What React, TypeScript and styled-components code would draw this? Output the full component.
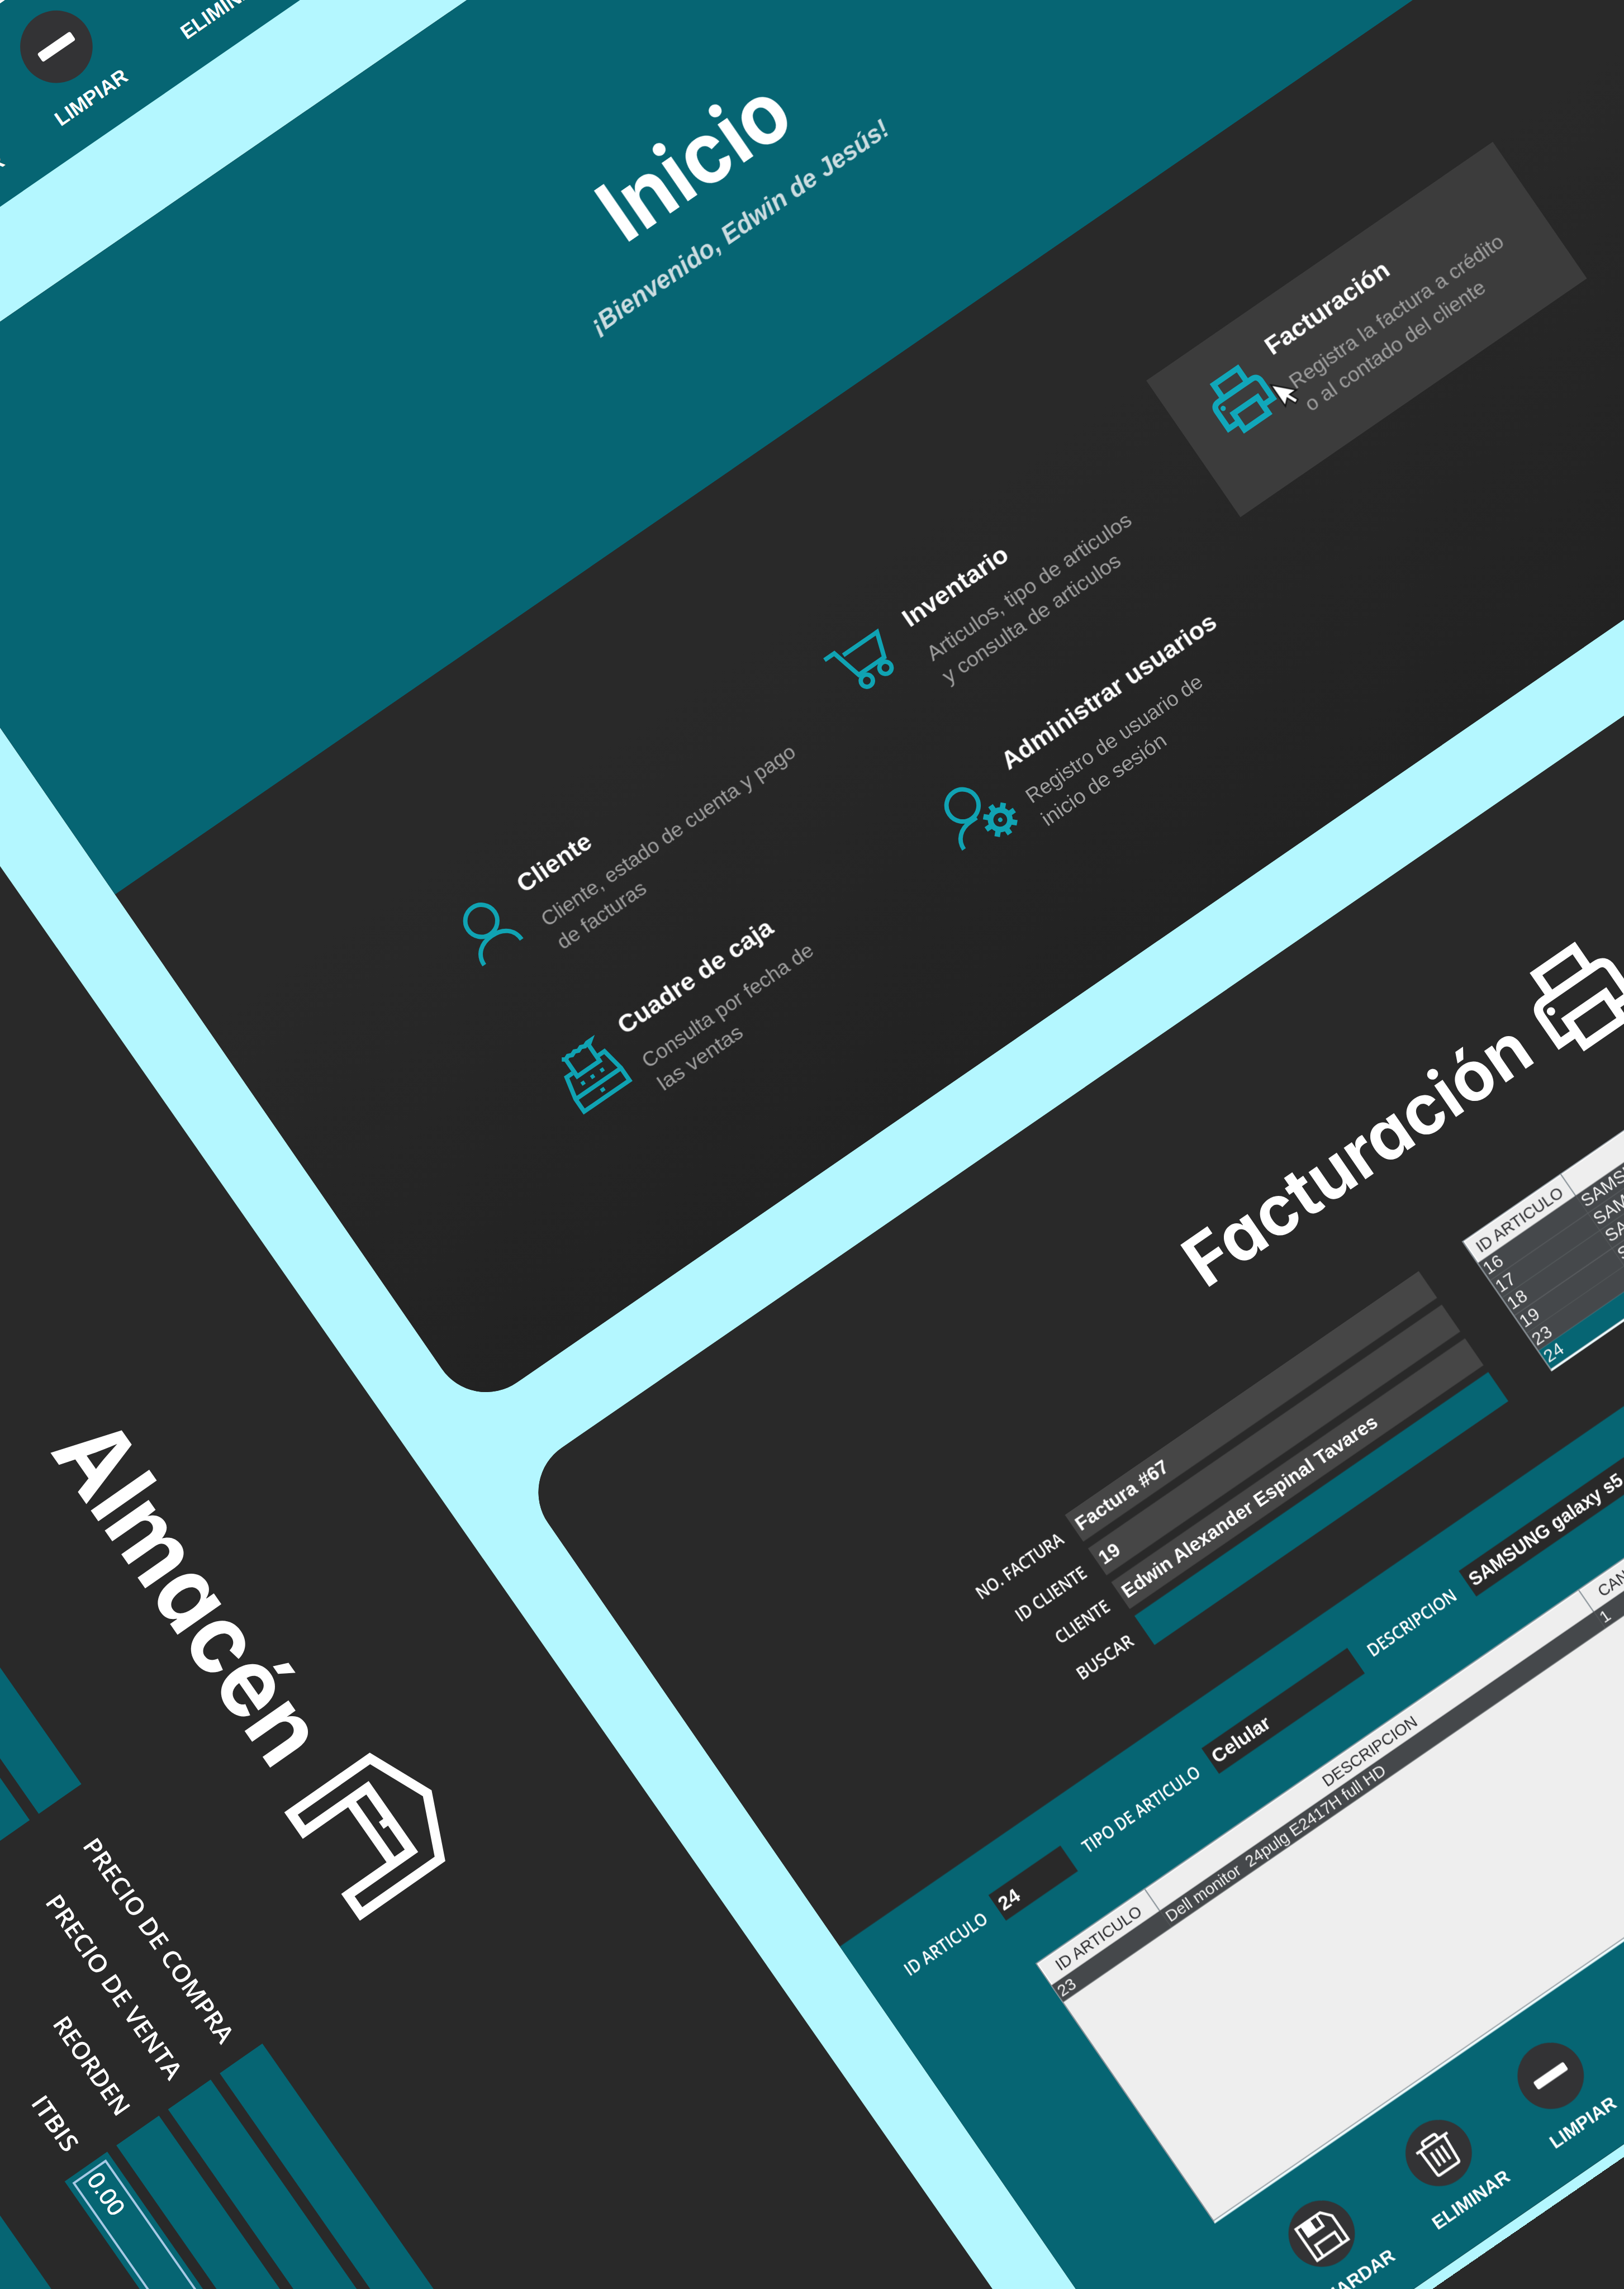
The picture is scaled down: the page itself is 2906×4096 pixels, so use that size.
import React, { ReactNode, useLayoutEffect, useRef, useState } from "react";
import styled, { createGlobalStyle, css } from "styled-components";

const color = {
  sky: "#b4f7ff",
  teal: "#066573",
  dark: "#292929",
  darkEnd: "#222222",
  field: "#464646",
  tile: "#3c3c3c",
  accent: "#10a3b3",
  disc: "#333335",
  paper: "#eeeeee",
  rowDark: "#45484b",
  rule: "#7f8a91",
};

const arial = `"Liberation Sans", Arial, sans-serif`;
const label = `"Open Sans", "Noto Sans", sans-serif`;
const display = `Inter, "Liberation Sans", sans-serif`;

const GlobalStyle = createGlobalStyle`
  html, body { margin: 0; padding: 0; background: ${color.sky}; overflow: hidden; }
  * { box-sizing: border-box; }
`;

const Viewport = styled.main`
  position: relative;
  width: 2906px;
  height: 4096px;
  overflow: hidden;
  background: ${color.sky};
`;

const Board = styled.div`
  position: relative;
  width: 2937px;
  height: 4139px;
  transform-origin: 0 0;
  transform: scale(0.98944, 0.98961);
`;

/* A screen of the application laid at an angle on the board. */
const Screen = styled.section<{ $angle: number; $x: number; $y: number; $h: number; $bg?: string }>`
  position: absolute;
  left: 0;
  top: 0;
  width: 3751px;
  height: ${(p) => p.$h}px;
  border-radius: 98px;
  overflow: hidden;
  background: ${(p) => p.$bg ?? color.dark};
  transform-origin: 0 0;
  transform: rotate(${(p) => p.$angle}deg) translate(${(p) => p.$x}px, ${(p) => p.$y}px);
  font-family: ${arial};
  display: flex;
  flex-direction: column;
`;

/* ---------- text set to a given measure ---------- */

const Measure = styled.span<{ $w: number }>`
  display: inline-block;
  width: ${(p) => p.$w}px;
  white-space: pre;
  text-align: left;
`;

const Glyphs = styled.span`
  display: inline-block;
  transform-origin: 0 50%;
`;

function Fit({ w, children }: { w: number; children: string }) {
  const ref = useRef<HTMLSpanElement>(null);
  const [k, setK] = useState(1);
  useLayoutEffect(() => {
    if (!ref.current) return;
    const natural = parseFloat(getComputedStyle(ref.current).width);
    if (natural > 0) setK(w / natural);
  }, [w, children]);
  return (
    <Measure $w={w}>
      <Glyphs ref={ref} style={{ transform: `scaleX(${k})` }}>
        {children}
      </Glyphs>
    </Measure>
  );
}

/* ---------- headings ---------- */

const Heading = styled.h1<{ $size: number; $top?: number }>`
  margin: ${(p) => p.$top ?? 0}px 0 0;
  font-family: ${display};
  font-feature-settings: "cv11" 1, "ss03" 1;
  font-weight: 700;
  font-size: ${(p) => p.$size}px;
  line-height: ${(p) => p.$size}px;
  color: #fff;
  white-space: nowrap;
`;

const TitleRow = styled.div<{ $top: number; $left: number; $gap: number }>`
  display: flex;
  align-items: flex-start;
  gap: ${(p) => p.$gap}px;
  padding: ${(p) => p.$top}px 0 0 ${(p) => p.$left}px;
  flex: none;
`;

/* ---------- icons ---------- */

const Svg = styled.svg<{ $w: number; $h: number }>`
  display: block;
  flex: none;
  width: ${(p) => p.$w}px;
  height: ${(p) => p.$h}px;
  overflow: visible;
`;

const PrinterShape = () => (
  <g fill="none" stroke="currentColor" strokeWidth="16.5">
    <path d="M44.5 56V8.5H127.5V56" />
    <path d="M44 136.5H8.5V77Q8.5 56.5 29 56.5H142Q162.5 56.5 162.5 77V136.5H128" />
    <rect x="44.5" y="108.5" width="83" height="56" />
    <circle cx="28.5" cy="79.5" r="7.5" fill="currentColor" stroke="none" />
  </g>
);

const Stroke = ({ children }: { children: ReactNode }) => (
  <g fill="none" stroke={color.accent} strokeWidth="8">
    {children}
  </g>
);

const PrinterGlyph = () => (
  <g transform="translate(20 27) scale(.632)" color="#11a7ba">
    <PrinterShape />
  </g>
);

const UserGlyph = () => (
  <Stroke>
    <circle cx="73.5" cy="46" r="29" />
    <path d="M32.5 115C32.5 92 50 79 73.5 79S114.5 92 114.5 115" />
  </Stroke>
);

const CartGlyph = () => (
  <Stroke>
    <path d="M5 10H26.5L41 67H97L112 22H38" />
    <circle cx="47" cy="84" r="11" />
    <circle cx="88" cy="84" r="11" />
  </Stroke>
);

const RegisterGlyph = () => (
  <Stroke>
    <path d="M52 62V25L46 21L52 25L59 22L66 25L73 22L80 25L87 22L94 25L101 22L108 22L101 27V62" />
    <path d="M48 62H105" />
    <path d="M48 52.5H35L26 94V121.500H125.500V94L118 52.5H104" />
    <path d="M27 94.500H125" />
    <path d="M50 78H57M71 78H78M92 78H99M72 108H80" strokeWidth="7" />
  </Stroke>
);

const GearTeeth = [0, 45, 90, 135, 180, 225, 270, 315];

const AdminGlyph = () => (
  <Stroke>
    <circle cx="60.500" cy="54" r="29" />
    <path d="M17.500 121C17.500 101 33 86.500 56 86.500H69" />
    <g transform="translate(102 114)">
      <circle r="17.500" strokeWidth="10" />
      {GearTeeth.map((a) => (
        <rect key={a} x="-5" y="-31" width="10" height="12" fill={color.accent} stroke="none" transform={`rotate(${a})`} />
      ))}
      <circle r="4" fill={color.accent} stroke="none" />
    </g>
  </Stroke>
);

const Warehouse = () => (
  <Svg $w={239} $h={241} viewBox="0 0 239 241">
    <g fill="none" stroke="#fff" strokeWidth="17.5">
      <path d="M8.500 232.500V58.500L119.500 9.500L230 58.500V232.500H188.500V92.500H49.500V232.500Z" />
      <path d="M49.500 132.500H188.500" />
      <path d="M119.500 98V111" strokeWidth="15" />
    </g>
  </Svg>
);

/* ---------- Inicio ---------- */

const Hero = styled.header`
  flex: none;
  height: 971px;
  background: ${color.teal};
  padding: 394px 0 0 1294px;
`;

const Greeting = styled.p`
  margin: 44px 0 0;
  font: italic 700 47px/50px ${arial};
  color: #cbdce0;
`;

const Modules = styled.div`
  flex: 1;
  display: grid;
  grid-template-columns: 845px 820px 761px;
  grid-template-rows: 300px 300px;
  row-gap: 14px;
  padding: 326px 0 0 398px;
  background: linear-gradient(${color.dark} 25%, ${color.darkEnd});
`;

const Tile = styled.article<{ $active?: boolean; $indent?: number }>`
  position: relative;
  width: 761px;
  height: 300px;
  display: flex;
  gap: 25px;
  padding: 52px 0 0 ${(p) => 48 + (p.$indent ?? 0)}px;
  ${(p) =>
    p.$active &&
    css`
      background: ${color.tile};
      margin-top: -33px;
    `}
`;

const TileIcon = styled.div`
  flex: none;
  width: 140px;
  height: 140px;
  margin-top: -9px;
`;

const TileTitle = styled.h2`
  margin: 0;
  font: 700 45.5px/50px ${arial};
  color: #fff;
  white-space: nowrap;
`;

const TileText = styled.p`
  margin: 25.500px 0 0;
  font: 400 37.4px/50.500px ${arial};
  color: #9f9f9f;
  display: flex;
  flex-direction: column;
`;

const Pointer = styled.svg`
  position: absolute;
  left: 181px;
  top: 134px;
  width: 34px;
  height: 54px;
  overflow: visible;
`;

interface Module {
  title: string;
  width: number;
  lines: [string, number][];
  icon: ReactNode;
  active?: boolean;
  indent?: number;
}

const modules: Module[] = [
  {
    title: "Cliente",
    width: 153,
    lines: [["Cliente, estado de cuenta y pago", 549], ["de facturas", 187]],
    icon: <UserGlyph />,
    indent: -1,
  },
  {
    title: "Inventario",
    width: 221,
    lines: [["Articulos, tipo de articulos", 440], ["y consulta de articulos", 382]],
    icon: <CartGlyph />,
    indent: 1,
  },
  {
    title: "Facturación",
    width: 262,
    lines: [["Registra la factura a crédito", 461], ["o al contado del cliente", 387]],
    icon: <PrinterGlyph />,
    active: true,
  },
  {
    title: "Cuadre de caja",
    width: 330,
    lines: [["Consulta por fecha de", 367], ["las ventas", 178]],
    icon: <RegisterGlyph />,
    indent: 4,
  },
  {
    title: "Administrar usuarios",
    width: 461,
    lines: [["Registro de usuario de", 379], ["inicio de sesión", 265]],
    icon: <AdminGlyph />,
    indent: 2,
  },
];

const HeroTitle = styled.div`
  padding-left: 132px;
`;

function HomeScreen() {
  return (
    <Screen $angle={-34.57} $x={-746.5} $y={479} $h={2110}>
      <Hero>
        <HeroTitle>
          <Heading $size={154}>
            <Fit w={379}>Inicio</Fit>
          </Heading>
        </HeroTitle>
        <Greeting>
          <Fit w={643}>¡Bienvenido, Edwin de Jesús!</Fit>
        </Greeting>
      </Hero>
      <Modules>
        {modules.map((m) => (
          <Tile key={m.title} $active={m.active} $indent={m.indent}>
            <TileIcon>
              <Svg $w={140} $h={140} viewBox="0 0 140 140">
                {m.icon}
              </Svg>
            </TileIcon>
            <div>
              <TileTitle>
                <Fit w={m.width}>{m.title}</Fit>
              </TileTitle>
              <TileText>
                {m.lines.map(([text, w]) => (
                  <Fit key={text} w={w}>
                    {text}
                  </Fit>
                ))}
              </TileText>
            </div>
            {m.active && (
              <Pointer viewBox="0 0 12 19">
                <path d="M0 0V16.500L3.900 12.900L6.400 18.600L9 17.400L6.500 11.900H11.700Z" fill="#fff" stroke="#111" strokeWidth=".9" />
              </Pointer>
            )}
          </Tile>
        ))}
      </Modules>
    </Screen>
  );
}

/* ---------- round actions ---------- */

const Actions = styled.div<{ $top: number; $left: number }>`
  display: flex;
  flex: none;
  padding: ${(p) => p.$top}px 0 0 ${(p) => p.$left}px;
`;

const Action = styled.div<{ $w: number; $size: number }>`
  flex: none;
  width: ${(p) => p.$w}px;
  display: flex;
  flex-direction: column;
  align-items: center;
  gap: ${(p) => p.$size * 0.205}px;
  font: 700 ${(p) => p.$size * 0.279}px/${(p) => p.$size * 0.3}px ${arial};
  color: #fff;
`;

const Disc = styled.div<{ $size: number }>`
  width: ${(p) => p.$size}px;
  height: ${(p) => p.$size}px;
  border-radius: 50%;
  background: ${color.disc};
`;

const SaveGlyph = () => (
  <g fill="none" stroke="#fff" strokeWidth="5">
    <path d="M-34-33H19L34-16V35.500H-34Z" />
    <path d="M-21 35V11H21V35" />
    <path d="M-22-33V-10H10V-33" />
    <path d="M-22-33H-6V-10H-22Z" fill="#fff" />
  </g>
);

const TrashGlyph = () => (
  <g fill="none" stroke="#fff" strokeWidth="5">
    <path d="M-34-21.500H34" />
    <path d="M-15-22V-29Q-15-33-11-33H10Q14-33 14-29V-22" />
    <path d="M-26-21L-24 31Q-24 34-21 34H19Q22 34 22.500 31L26-21" />
    <path d="M-11-9V21M0-9V21M11-9V21" />
  </g>
);

const MinusGlyph = () => <rect x="-33" y="-8.5" width="66" height="17" rx="3.5" fill="#fff" />;

function RoundAction({ name, glyph, w, size = 120 }: { name: string; glyph: ReactNode; w: number; size?: number }) {
  return (
    <Action $w={w} $size={size}>
      <Disc $size={size}>
        <Svg $w={size} $h={size} viewBox="-60 -60 120 120">
          {glyph}
        </Svg>
      </Disc>
      <span>{name}</span>
    </Action>
  );
}

/* ---------- forms ---------- */

const Label = styled.span<{ $size: number; $lift?: number }>`
  display: block;
  text-align: right;
  font-family: ${label};
  font-weight: 600;
  font-size: ${(p) => p.$size}px;
  line-height: 1.2;
  margin-top: ${(p) => p.$lift ?? 0}px;
  color: #fff;
  white-space: nowrap;
`;

const Field = styled.div<{ $w?: number; $h: number; $bg: string }>`
  flex: none;
  width: ${(p) => (p.$w ? `${p.$w}px` : "auto")};
  height: ${(p) => p.$h}px;
  padding-left: 7px;
  background: ${(p) => p.$bg};
  font: 700 35.5px/${(p) => p.$h}px ${arial};
  color: #fff;
  white-space: nowrap;
`;

/* ---------- tables ---------- */

const Table = styled.div<{ $h: number; $size?: number }>`
  display: flex;
  flex-direction: column;
  height: ${(p) => p.$h}px;
  background: ${color.paper};
  border-left: 2px solid ${color.rule};
  border-top: 2px solid ${color.rule};
  border-bottom: 4px solid #eefcff;
  box-shadow: inset 0 -2px 0 ${color.rule};
  font: 400 ${(p) => p.$size ?? 30.5}px/37px ${arial};
`;

const HeadRow = styled.div<{ $cols: string }>`
  display: grid;
  grid-template-columns: ${(p) => p.$cols};
  height: 47px;
  flex: none;
  font-size: 30.5px;
  line-height: 48px;
  color: #2b2b2e;
  text-align: center;
  box-shadow: inset 2px 2px 0 #fff;
`;

const HeadCell = styled.div`
  border-right: 2px solid ${color.rule};
  white-space: nowrap;
`;

const Row = styled.div<{ $cols: string; $h: number; $selected?: boolean }>`
  display: grid;
  grid-template-columns: ${(p) => p.$cols};
  height: ${(p) => p.$h}px;
  flex: none;
  line-height: ${(p) => p.$h - 2}px;
  background: ${(p) => (p.$selected ? color.teal : color.rowDark)};
  color: #f2f2f2;
  border-bottom: 1.5px solid ${(p) => (p.$selected ? color.teal : "#5a5e61")};
`;

const Cell = styled.div`
  padding-left: 3px;
  border-right: 1.5px solid #5a5e61;
  white-space: pre;
`;

/* ---------- Facturación ---------- */

const InvoiceTop = styled.div`
  flex: none;
  height: 1028px;
  background: ${color.dark};
`;

const InvoiceBottom = styled.div`
  flex: 1;
  background: ${color.teal};
`;

const CustomerArea = styled.div`
  display: grid;
  grid-template-columns: 749.5px 777px 1700px;
  column-gap: 0;
  margin-top: 157px;
`;

const Stack = styled.div<{ $gap: number }>`
  display: flex;
  flex-direction: column;
  gap: ${(p) => p.$gap}px;
`;

const LabelLine = styled.div<{ $h: number }>`
  height: ${(p) => p.$h}px;
  display: flex;
  align-items: center;
  justify-content: flex-end;
`;

const Inset = styled.div<{ $left: number }>`
  margin-left: ${(p) => p.$left}px;
`;

const ItemLine = styled.div`
  display: flex;
  align-items: center;
  padding: 76px 0 0 73px;
`;

const Gap = styled.span<{ $w: number }>`
  flex: none;
  width: ${(p) => p.$w}px;
`;

const customer = [
  { name: "NO. FACTURA", w: 184, value: "Factura #67", vw: 196, h: 59, bg: color.field },
  { name: "ID CLIENTE", w: 148, value: "19", vw: 39, h: 59, bg: color.field },
  { name: "CLIENTE", w: 112, value: "Edwin Alexander Espinal Tavares", vw: 553, h: 59, bg: color.field },
  { name: "BUSCAR", w: 117, value: "", vw: 0, h: 64, bg: color.teal },
];

const stock = [
  ["16", "SAMSUNG galaxy s5"],
  ["17", "SAMSUNG galaxy s6"],
  ["18", "SAMSUNG galaxy s7"],
  ["19", "SAMSUNG galaxy s8"],
  ["23", "Dell monitor"],
  ["24", "SAMSUNG galaxy s5"],
];

const ItemTable = styled.div`
  margin: 94px 0 0 274px;
`;

function InvoiceScreen() {
  const stockCols = "215px 1200px";
  const itemCols = "238px 953px 202px";
  return (
    <Screen $angle={-34.57} $x={-746.5} $y={2732} $h={2127}>
      <InvoiceTop>
        <TitleRow $top={286} $left={1219} $gap={42}>
          <Heading $size={126.5} $top={30}>
            <Fit w={729}>Facturación</Fit>
          </Heading>
          <Svg $w={171} $h={173} viewBox="0 0 171 173" color="#fff">
            <PrinterShape />
          </Svg>
        </TitleRow>
        <CustomerArea>
          <Stack $gap={15}>
            {customer.map((c) => (
              <LabelLine key={c.name} $h={c.h}>
                <Label $size={32.5} $lift={-3}>
                  <Fit w={c.w}>{c.name}</Fit>
                </Label>
              </LabelLine>
            ))}
          </Stack>
          <Inset $left={28.5}>
            <Stack $gap={15}>
              {customer.map((c) => (
                <Field key={c.name} $w={777} $h={c.h} $bg={c.bg}>
                  {c.value && <Fit w={c.vw}>{c.value}</Fit>}
                </Field>
              ))}
            </Stack>
          </Inset>
          <Inset $left={123}>
            <Table $h={286} $size={32.5}>
              <HeadRow $cols={stockCols}>
                <HeadCell>
                  <Fit w={184}>ID ARTICULO</Fit>
                </HeadCell>
                <HeadCell>DESCRIPCION</HeadCell>
              </HeadRow>
              {stock.map(([id, text]) => (
                <Row key={id} $cols={stockCols} $h={38.7} $selected={id === "24"}>
                  <Cell>{id}</Cell>
                  <Cell>{text}</Cell>
                </Row>
              ))}
            </Table>
          </Inset>
        </CustomerArea>
      </InvoiceTop>
      <InvoiceBottom>
        <ItemLine>
          <Label $size={32.5}>
            <Fit w={175}>ID ARTICULO</Fit>
          </Label>
          <Gap $w={25.5} />
          <Field $w={158} $h={56} $bg={color.dark}>
            24
          </Field>
          <Gap $w={32} />
          <Label $size={32.5}>
            <Fit w={251}>TIPO DE ARTICULO</Fit>
          </Label>
          <Gap $w={27.5} />
          <Field $w={320} $h={56} $bg={color.dark}>
            <Fit w={121}>Celular</Fit>
          </Field>
          <Gap $w={28} />
          <Label $size={32.5}>
            <Fit w={188}>DESCRIPCION</Fit>
          </Label>
          <Gap $w={28.5} />
          <Field $w={700} $h={56} $bg={color.dark}>
            <Fit w={330}>SAMSUNG galaxy s5</Fit>
          </Field>
        </ItemLine>
        <ItemTable>
          <Table $h={571}>
            <HeadRow $cols={itemCols}>
              <HeadCell>
                <Fit w={182}>ID ARTICULO</Fit>
              </HeadCell>
              <HeadCell>
                <Fit w={201}>DESCRIPCION</Fit>
              </HeadCell>
              <HeadCell>
                <Fit w={147}>CANTIDAD</Fit>
              </HeadCell>
            </HeadRow>
            <Row $cols={itemCols} $h={37}>
              <Cell>23</Cell>
              <Cell>
                <Fit w={476}>{"Dell monitor  24pulg E2417H full HD"}</Fit>
              </Cell>
              <Cell>1</Cell>
            </Row>
          </Table>
        </ItemTable>
        <Actions $top={65} $left={294.5}>
          <RoundAction name="GUARDAR" glyph={<SaveGlyph />} w={257} />
          <RoundAction name="ELIMINAR" glyph={<TrashGlyph />} w={257} />
          <RoundAction name="LIMPIAR" glyph={<MinusGlyph />} w={235} />
        </Actions>
      </InvoiceBottom>
    </Screen>
  );
}

/* ---------- upper screen: only its foot shows ---------- */

const Sheet = styled.div`
  flex: none;
  height: 205px;
  margin-left: 270px;
  background: ${color.paper};
  border-bottom: 3px solid #fff;
`;

function UpperScreen() {
  return (
    <Screen $angle={-34.57} $x={-746.5} $y={-200} $h={508} $bg={color.teal}>
      <Sheet />
      <Actions $top={56.5} $left={348}>
        <RoundAction name="GUARDAR" glyph={<SaveGlyph />} w={289.5} size={131} />
        <RoundAction name="LIMPIAR" glyph={<MinusGlyph />} w={289.5} size={131} />
        <RoundAction name="ELIMINAR" glyph={<TrashGlyph />} w={289.5} size={131} />
      </Actions>
    </Screen>
  );
}

/* ---------- Almacén ---------- */

const StoreForm = styled.div`
  flex: none;
  display: grid;
  grid-template-columns: 730px 532px 1200px;
  grid-template-rows: repeat(4, 93.5px);
  row-gap: 20.6px;
  margin: 272px 0 131px 1100px;
`;

const StoreLabel = styled.div`
  display: flex;
  align-items: center;
  justify-content: flex-end;
`;

const StoreField = styled.div<{ $indent?: number }>`
  margin-left: ${(p) => p.$indent ?? 0}px;
  padding: 10px;
  background: ${color.teal};
`;

const FocusBox = styled.div`
  height: 73.5px;
  border: 4px solid #a6c9e4;
  padding-left: 6px;
  font: 400 43px/62px ${arial};
  -webkit-text-stroke: 0.8px #fff;
  color: #fff;
`;

const StoreFoot = styled.div`
  flex: 1;
  background: ${color.teal};
`;

const storeRows = [
  { name: "PRECIO DE COMPRA", w: 440 },
  { name: "PRECIO DE VENTA", w: 395 },
  { name: "REORDEN", w: 207 },
  { name: "ITBIS", w: 112, value: "0.00" },
];

function StoreScreen() {
  return (
    <Screen $angle={55.1} $x={900} $y={896} $h={2110}>
      <TitleRow $top={316} $left={1303} $gap={71}>
        <Heading $size={177} $top={64}>
          <Fit w={708}>Almacén</Fit>
        </Heading>
        <Warehouse />
      </TitleRow>
      <StoreForm>
        {storeRows.map((r) => (
          <React.Fragment key={r.name}>
            <StoreField />
            <StoreLabel>
              <Label $size={44}>
                <Fit w={r.w}>{r.name}</Fit>
              </Label>
            </StoreLabel>
            <StoreField $indent={39.5}>{r.value && <FocusBox>{r.value}</FocusBox>}</StoreField>
          </React.Fragment>
        ))}
      </StoreForm>
      <StoreFoot />
    </Screen>
  );
}

export default function App() {
  return (
    <Viewport>
      <GlobalStyle />
      <Board>
        <StoreScreen />
        <UpperScreen />
        <HomeScreen />
        <InvoiceScreen />
        <Screen $angle={-34.57} $x={-746.5} $y={4878} $h={2110} />
      </Board>
    </Viewport>
  );
}
